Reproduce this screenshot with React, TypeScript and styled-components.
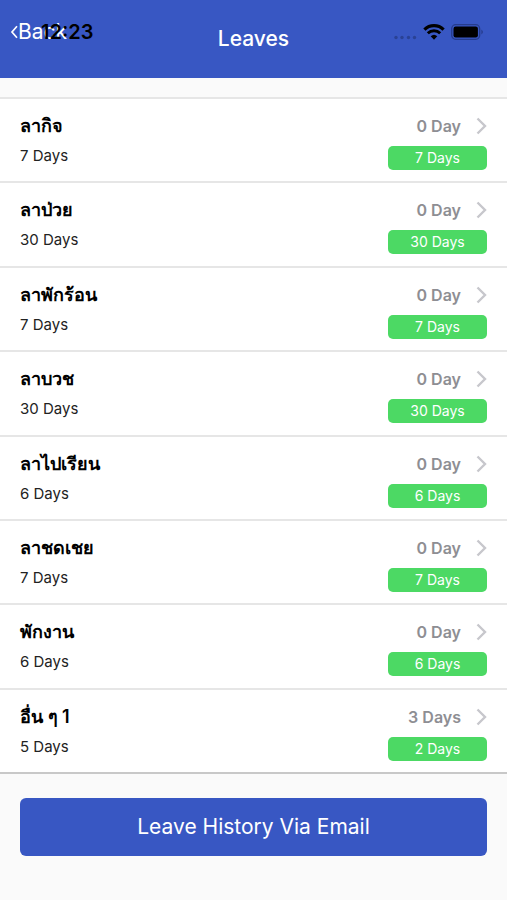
import React from "react";
import styled, { createGlobalStyle } from "styled-components";

const GlobalStyle = createGlobalStyle`
  *, *::before, *::after { box-sizing: border-box; }
  body {
    margin: 0;
    background: #fafafa;
    color: #000;
    font-family: Inter, sans-serif;
  }
  h1, h2, p, ul { margin: 0; padding: 0; }
`;

const Screen = styled.div`
  position: relative;
  min-height: 100vh;
`;

const StatusBar = styled.div`
  position: absolute;
  inset: 0 0 auto;
  display: flex;
  align-items: center;
  justify-content: space-between;
  height: 64px;
  padding: 0 23px 0 41px;
  pointer-events: none;
`;

const Clock = styled.time`
  font-size: 20px;
  font-weight: 600;
  line-height: 24px;
`;

const StatusIcons = styled.div`
  display: flex;
  align-items: center;
`;

const NavBar = styled.header`
  display: grid;
  grid-template-columns: 1fr auto 1fr;
  height: 78px;
  padding: 0 10px;
  background: #3857c3;
  color: #fff;
`;

const BackButton = styled.button`
  display: flex;
  align-items: center;
  justify-self: start;
  height: 64px;
  padding: 0;
  border: 0;
  background: none;
  color: inherit;
  font: 400 21px/24px Inter, sans-serif;
`;

const Title = styled.h1`
  align-self: end;
  padding-bottom: 25px;
  font-size: 21px;
  font-weight: 500;
  line-height: 28px;
`;

const LeaveList = styled.ul`
  display: grid;
  grid-auto-rows: 1fr;
  min-height: 677px;
  margin-top: 19px;
  border-bottom: 2px solid #c8c8c8;
  list-style: none;
`;

const LeaveItem = styled.li`
  border-top: 2px solid #e6e6e6;
  background: #fff;
`;

const LeaveLink = styled.a`
  display: flex;
  justify-content: space-between;
  padding: 12px 20px 0;
  color: inherit;
  text-decoration: none;
`;

const LeaveName = styled.h2`
  font-family: Inter, serif;
  font-size: 18px;
  font-weight: 600;
  line-height: 30px;
`;

const Allowance = styled.p`
  font-size: 15px;
  line-height: 30px;
  color: #222;
`;

const Usage = styled.div`
  display: flex;
  flex-direction: column;
  width: 99px;
`;

const Used = styled.p`
  display: flex;
  align-items: center;
  justify-content: flex-end;
  gap: 15px;
  height: 30px;
  font-size: 16px;
  font-weight: 600;
  color: #8e8e93;
  white-space: nowrap;
`;

const Remaining = styled.p`
  margin-top: 5px;
  border-radius: 5px;
  background: #4cd964;
  color: #fff;
  font-size: 14px;
  line-height: 24px;
  text-align: center;
`;

const Footer = styled.footer`
  padding: 24px 20px;
`;

const EmailButton = styled.button`
  display: block;
  width: 100%;
  height: 58px;
  border: 0;
  border-radius: 6px;
  background: #3857c3;
  color: #fff;
  font: 400 21px/28px Inter, sans-serif;
`;

interface Leave {
  name: string;
  total: string;
  used: string;
  remaining: string;
}

const leaves: Leave[] = [
  { name: "ลากิจ", total: "7 Days", used: "0 Day", remaining: "7 Days" },
  { name: "ลาป่วย", total: "30 Days", used: "0 Day", remaining: "30 Days" },
  { name: "ลาพักร้อน", total: "7 Days", used: "0 Day", remaining: "7 Days" },
  { name: "ลาบวช", total: "30 Days", used: "0 Day", remaining: "30 Days" },
  { name: "ลาไปเรียน", total: "6 Days", used: "0 Day", remaining: "6 Days" },
  { name: "ลาชดเชย", total: "7 Days", used: "0 Day", remaining: "7 Days" },
  { name: "พักงาน", total: "6 Days", used: "0 Day", remaining: "6 Days" },
  { name: "อื่น ๆ 1", total: "5 Days", used: "3 Days", remaining: "2 Days" },
];

const BackIcon = () => (
  <svg width="8" height="14" viewBox="0 0 8 14" fill="none" aria-hidden="true">
    <path d="M7 1.2 L2 7 L7 12.8" stroke="#fff" strokeWidth="1.7" />
  </svg>
);

const ChevronIcon = () => (
  <svg width="11" height="18" viewBox="0 0 11 18" fill="none" aria-hidden="true">
    <path d="M1.5 1.5 L9 9 L1.5 16.5" stroke="#c7c7cc" strokeWidth="2.4" />
  </svg>
);

const SignalIcon = () => (
  <svg width="24" height="16" viewBox="0 0 24 16" fill="#2a4295" aria-hidden="true">
    <circle cx="2" cy="13.5" r="1.7" />
    <circle cx="8" cy="13.5" r="1.7" />
    <circle cx="14.5" cy="13.5" r="1.7" />
    <circle cx="20.5" cy="13.5" r="1.7" />
  </svg>
);

const WifiIcon = () => (
  <svg width="32" height="16" viewBox="0 0 32 16" fill="none" aria-hidden="true">
    <path d="M6.4 5.6 A13.8 13.8 0 0 1 25.6 5.6" stroke="#000" strokeWidth="3.2" />
    <path d="M9.8 9.3 A8.8 8.8 0 0 1 22.2 9.3" stroke="#000" strokeWidth="2.9" />
    <path d="M12.7 12.3 A4.8 4.8 0 0 1 19.3 12.3 L16 15.7 Z" fill="#000" />
  </svg>
);

const BatteryIcon = () => (
  <svg width="34" height="16" viewBox="0 0 34 16" aria-hidden="true">
    <rect x="1.7" y="0.7" width="28" height="14.6" rx="4" fill="none" stroke="#263c8c" strokeWidth="1.3" />
    <rect x="3.5" y="2.5" width="24.4" height="11" rx="2.2" fill="#000" />
    <path d="M31.4 5.4 Q34.4 8 31.4 10.6 Z" fill="#263c8c" />
  </svg>
);

export default function App() {
  return (
    <Screen>
      <GlobalStyle />
      <NavBar>
        <BackButton type="button">
          <BackIcon />
          Back
        </BackButton>
        <Title>Leaves</Title>
      </NavBar>
      <StatusBar>
        <Clock>12:23</Clock>
        <StatusIcons>
          <SignalIcon />
          <WifiIcon />
          <BatteryIcon />
        </StatusIcons>
      </StatusBar>
      <main>
        <LeaveList>
          {leaves.map((leave) => (
            <LeaveItem key={leave.name}>
              <LeaveLink href="#">
                <div>
                  <LeaveName>{leave.name}</LeaveName>
                  <Allowance>{leave.total}</Allowance>
                </div>
                <Usage>
                  <Used>
                    {leave.used}
                    <ChevronIcon />
                  </Used>
                  <Remaining>{leave.remaining}</Remaining>
                </Usage>
              </LeaveLink>
            </LeaveItem>
          ))}
        </LeaveList>
      </main>
      <Footer>
        <EmailButton type="button">Leave History Via Email</EmailButton>
      </Footer>
    </Screen>
  );
}
